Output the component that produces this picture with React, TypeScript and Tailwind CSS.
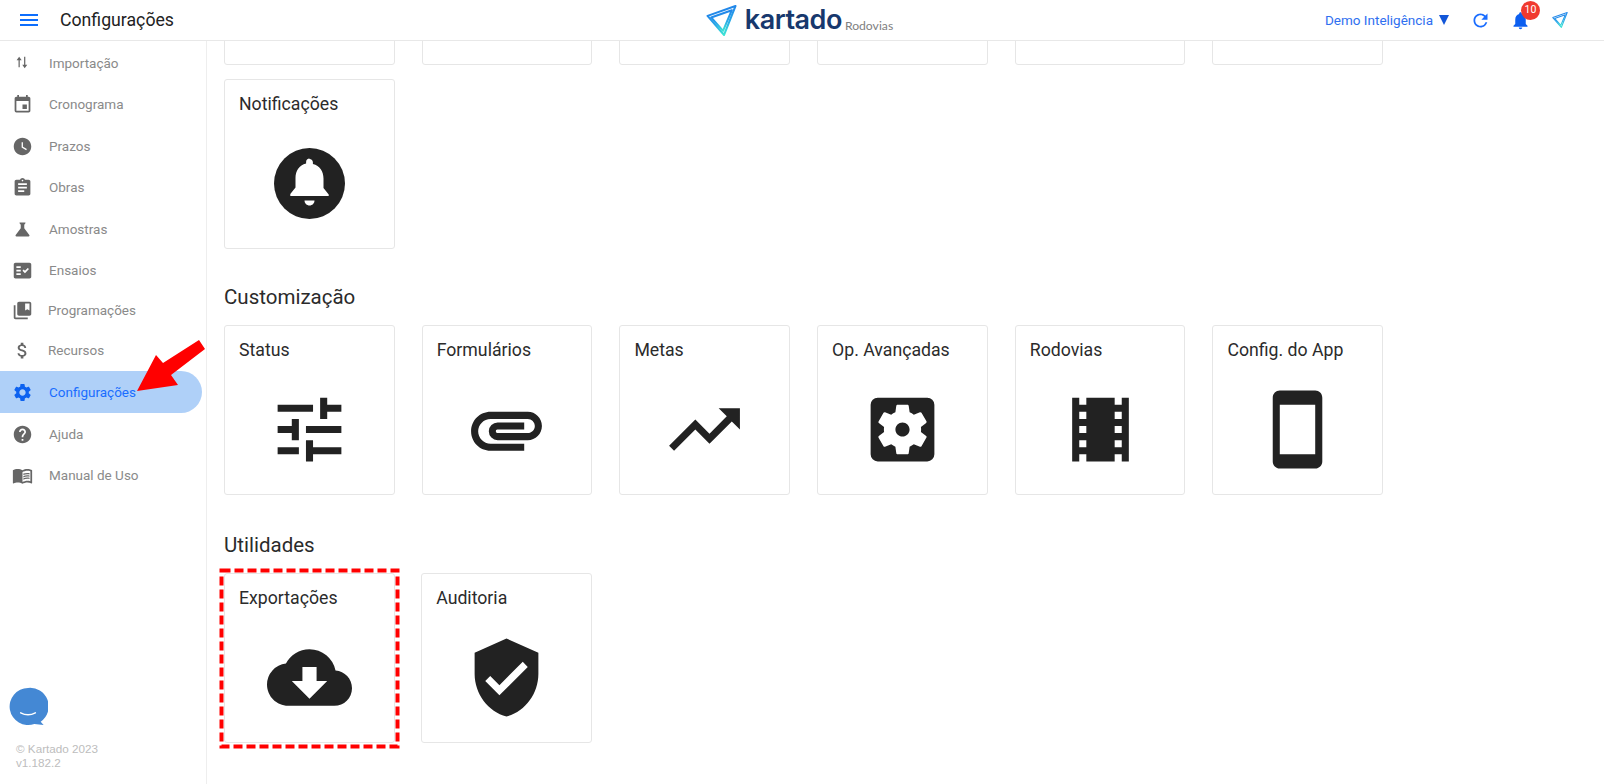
import React from "react";
import {
  MdMenu, MdEvent, MdWatchLater, MdAssignment, MdScience, MdFactCheck, MdCollectionsBookmark,
  MdAttachMoney, MdSettings, MdHelp, MdMenuBook, MdRefresh, MdNotifications, MdTune, MdAttachment,
  MdTrendingUp, MdSettingsApplications, MdLocalMovies, MdStayCurrentPortrait, MdCloudDownload, MdVerifiedUser,
} from "react-icons/md";

function ImportIcon() {
  return (
    <svg width="15" height="15" viewBox="0 0 17 17" fill="currentColor" className="-mt-[3px]">
      <path d="M4 6v8h1.4V6H7.6L4.7 2 1.8 6z" />
      <path d="M10.3 3v9H8.2l2.8 4 2.9-4h-2.2V3z" transform="translate(0 -1)" />
    </svg>
  );
}

const nav = [
  { label: "Importação", Icon: ImportIcon, row: "h-[41px]", text: "pl-[49px]" },
  { label: "Cronograma", Icon: MdEvent, row: "h-[41px]", text: "pl-[49px]" },
  { label: "Prazos", Icon: MdWatchLater, row: "h-[42px]", text: "pl-[49px]" },
  { label: "Obras", Icon: MdAssignment, row: "h-[41px]", text: "pl-[49px]" },
  { label: "Amostras", Icon: MdScience, row: "h-[42px]", text: "pl-[49px]" },
  { label: "Ensaios", Icon: MdFactCheck, row: "h-[40px]", text: "pl-[49px]" },
  { label: "Programações", Icon: MdCollectionsBookmark, row: "h-[40px]", text: "pl-[48px]" },
  { label: "Recursos", Icon: MdAttachMoney, row: "h-[41px]", text: "pl-[48px]" },
  { label: "Configurações", Icon: MdSettings, row: "h-[42px]", text: "pl-[49px]", active: true },
  { label: "Ajuda", Icon: MdHelp, row: "h-[42px]", text: "pl-[49px]" },
  { label: "Manual de Uso", Icon: MdMenuBook, row: "h-[41px]", text: "pl-[49px]" },
];

function KartadoMark({ size, id }: { size: number; id: string }) {
  return (
    <svg width={size} height={size} viewBox="0 0 30 30" fill="none">
      <defs>
        <linearGradient id={id} x1="0.3" y1="0" x2="0.6" y2="1">
          <stop offset="0" stopColor="#1f78ea" />
          <stop offset="0.6" stopColor="#28a8e8" />
          <stop offset="1" stopColor="#3fe6d4" />
        </linearGradient>
      </defs>
      <path d="M28.5 1 L1.5 10.5 L17.5 29 Z" stroke={`url(#${id})`} strokeWidth="2" strokeLinejoin="round" />
      <path d="M25 5 L5 12 L16.5 25 Z" stroke={`url(#${id})`} strokeWidth="2" strokeLinejoin="round" />
    </svg>
  );
}

function BellCircle() {
  return (
    <svg width="71" height="71" viewBox="0 0 71 71">
      <circle cx="35.5" cy="35.5" r="35.5" fill="#222222" />
      <path
        d="M35.5 11c2 0 3.4 1.5 3.4 3.3v1.6c7 1.7 10.6 7.6 10.6 14.6v9.5l5.2 6.4v1.6H16.3V46l5.2-6.4v-9.5c0-7 3.6-12.9 10.6-14.6v-1.6c0-1.8 1.4-3.3 3.4-3.3z"
        fill="#ffffff"
      />
      <path d="M30.5 52.5h10c0 2.8-2.2 5-5 5s-5-2.2-5-5z" fill="#ffffff" />
    </svg>
  );
}

function Card({ title, children, className = "" }: { title?: string; children?: React.ReactNode; className?: string }) {
  return (
    <div className={`relative flex h-[170px] w-[170.5px] shrink-0 flex-col rounded-[3px] border border-[#e6e6e6] bg-white ${className}`}>
      {title && <div className="px-[14px] pt-[12px] text-[17.7px] leading-[24px] text-[#2b2b2b]">{title}</div>}
      <div className="flex flex-1 items-center justify-center pt-[2px] text-[#222222]">{children}</div>
    </div>
  );
}

export default function App() {
  return (
    <div className="relative flex h-[784px] w-[1604px] flex-col overflow-hidden bg-white font-['Roboto',sans-serif]">
      <header className="flex h-[41px] shrink-0 items-center justify-between border-b border-[#e8e8e8] bg-white">
        <div className="flex w-[500px] items-center">
          <MdMenu size={24} className="ml-[17px] text-[#0d6efd]" />
          <span className="ml-[19px] text-[17.7px] text-[#222222]">Configurações</span>
        </div>
        <div className="mr-[5px] flex items-end">
          <KartadoMark size={31} id="kg1" />
          <span className="ml-[8px] font-['Inter',sans-serif] text-[27px] font-semibold leading-[32px] tracking-[-0.5px] text-[#17386d]">kartado</span>
          <span className="mb-[3px] ml-[3px] font-['Lato',sans-serif] text-[12.2px] leading-[14px] text-[#808080]">Rodovias</span>
        </div>
        <div className="flex w-[500px] items-center justify-end pr-[35px] text-[#1a6dff]">
          <span className="text-[13.5px] text-[#2f6ff0]">Demo Inteligência</span>
          <span className="ml-[6px] h-0 w-0 border-x-[5px] border-t-[10px] border-x-transparent border-t-[#1256d8]" />
          <MdRefresh size={21} className="ml-[21px]" />
          <div className="relative ml-[19px]">
            <MdNotifications size={21} className="text-[#0d5ff0]" />
            <span className="absolute left-[11px] top-[-9px] flex h-[19px] w-[19px] items-center justify-center rounded-full bg-[#f0392f] text-[10.5px] text-white">10</span>
          </div>
          <span className="ml-[21px] mr-[1px]"><KartadoMark size={16} id="kg2" /></span>
        </div>
      </header>

      <div className="flex min-h-0 flex-1">
        <aside className="flex w-[207px] shrink-0 flex-col justify-between border-r border-[#eeeeee]">
          <nav className="pt-[2px]">
            {nav.map(({ label, Icon, row, text, active }) => (
              <div
                key={label}
                className={`relative flex w-[202px] items-center rounded-r-full ${row} ${active ? "bg-[#afd0f8] text-[#1a6dff]" : "text-[#8a8a8a]"}`}
              >
                <span className={`flex w-[45px] shrink-0 items-center justify-center ${active ? "text-[#0d62f0]" : "text-[#666666]"}`}>
                  <Icon size={21} />
                </span>
                <span className={`-ml-[45px] text-[13.5px] ${text}`}>{label}</span>
              </div>
            ))}
          </nav>
          <div className="pb-[14px] pl-[9px]">
            <svg width="39" height="41" viewBox="0 0 40 41">
              <path d="M19.5 0.5a19 19 0 1 0 6.5 36.9l9.5 1.1-3-3.5A19 19 0 0 0 19.5 0.5z" fill="#4488d4" />
              <path d="M12 26q7.5 4 15 0" stroke="#ffffff" strokeWidth="1.6" fill="none" strokeLinecap="round" />
            </svg>
            <div className="mt-[14px] pl-[7px] font-['Liberation_Sans',sans-serif] text-[11.7px] leading-[14px] text-[#bdbdbd]">
              <div>© Kartado 2023</div>
              <div>v1.182.2</div>
            </div>
          </div>
        </aside>

        <main className="min-w-0 flex-1 overflow-hidden pl-[17px]">
          <div className="-mt-[146px] flex gap-[27.2px]">
            {[0, 1, 2, 3, 4, 5].map((i) => (
              <Card key={i} />
            ))}
          </div>
          <div className="mt-[14px]">
            <Card title="Notificações"><BellCircle /></Card>
          </div>
          <h2 className="mt-[36px] text-[20.5px] font-normal leading-[24px] text-[#2b2b2b]">Customização</h2>
          <div className="mt-[16px] flex gap-[27.2px]">
            <Card title="Status"><MdTune size={85} /></Card>
            <Card title="Formulários"><MdAttachment size={85} /></Card>
            <Card title="Metas"><MdTrendingUp size={85} /></Card>
            <Card title="Op. Avançadas"><MdSettingsApplications size={85} /></Card>
            <Card title="Rodovias"><MdLocalMovies size={85} /></Card>
            <Card title="Config. do App"><MdStayCurrentPortrait size={85} /></Card>
          </div>
          <h2 className="mt-[38px] text-[20.5px] font-normal leading-[24px] text-[#2b2b2b]">Utilidades</h2>
          <div className="mt-[16px] flex gap-[26.7px]">
            <Card title="Exportações"><MdCloudDownload size={85} /></Card>
            <Card title="Auditoria"><MdVerifiedUser size={85} /></Card>
          </div>
        </main>
      </div>

      <svg className="pointer-events-none absolute left-0 top-0" width="410" height="784" viewBox="0 0 410 784">
        <polygon points="137,391 156,355 163,363 199,340 205,349 171,375 178,385" fill="#ff0000" />
        <rect x="221.5" y="570.5" width="176" height="176" fill="none" stroke="#ff0000" strokeWidth="4" strokeDasharray="9 4" />
      </svg>
    </div>
  );
}
